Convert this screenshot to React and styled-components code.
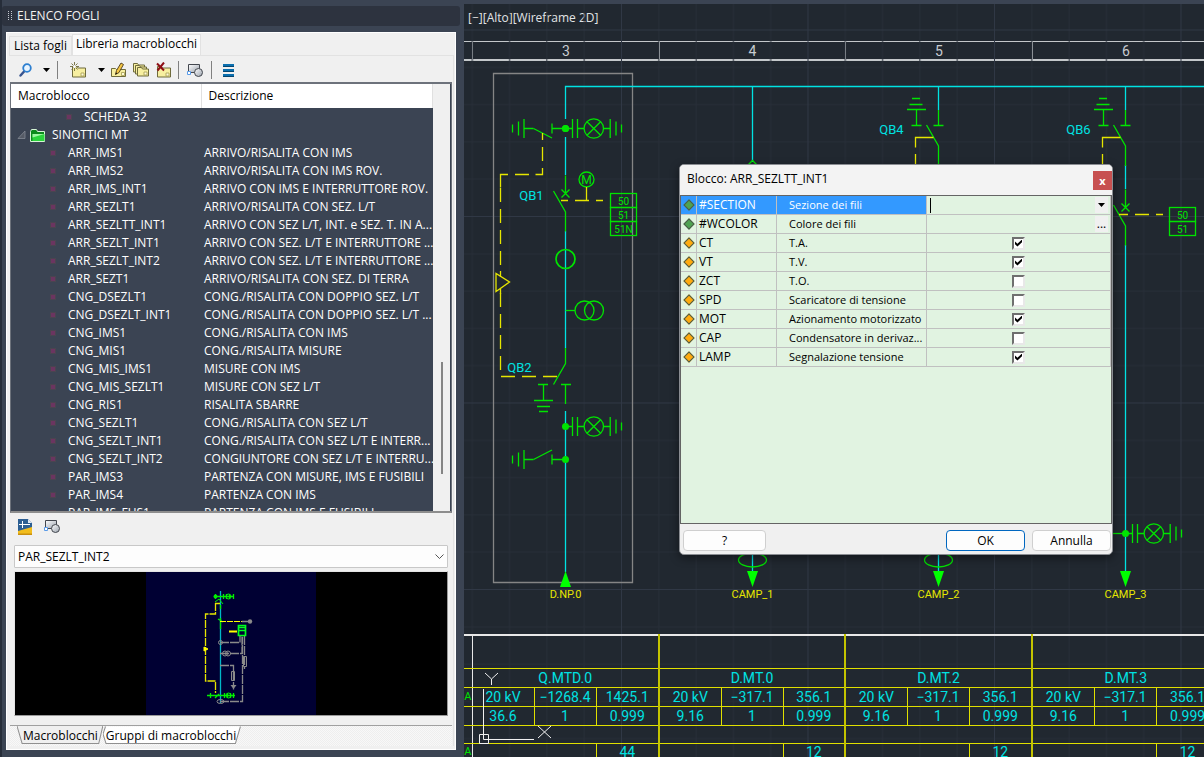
import React, { useState } from "react"
import styled, { createGlobalStyle } from "styled-components"

const GlobalStyle = createGlobalStyle`
  * {
    box-sizing: border-box;
  }
  body {
    margin: 0;
    background: #3b4453;
    color: #000;
    font: 12px/18px "Open Sans", "Noto Sans", sans-serif;
  }
  button, input, select {
    font: inherit;
    color: inherit;
  }
`

const Page = styled.div`
  display: grid;
  grid-template-columns: 464px minmax(0, 1fr);
  min-height: 100vh;
`

/* ---------- left palette ---------- */

const Palette = styled.aside`
  display: flex;
  flex-direction: column;
  height: 100vh;
  padding: 6px 4px 7px 0;
  border-left: 2px solid #262d39;
`

const PaletteTitle = styled.h1`
  display: flex;
  align-items: center;
  gap: 5px;
  height: 20px;
  margin: 0 0 6px;
  padding-left: 6px;
  border-radius: 3px;
  background: #2d333f;
  color: #f2f2f2;
  font-size: 12px;
  font-weight: 400;
`

const PaletteBody = styled.div`
  display: flex;
  flex: 1;
  flex-direction: column;
  min-height: 0;
  margin: 0 4px;
  padding: 1px 1px 3px 2px;
  border: 1px solid #fff;
  background: #f0f0f0;
`

const TopTabs = styled.div`
  display: flex;
  align-items: flex-end;
  height: 21px;
  flex: none;
`

const TopTab = styled.button`
  height: ${props => (props.$active ? 21 : 19)}px;
  padding: ${props => (props.$active ? "0 3px 2px" : "0 4px")};
  border: 1px solid #e2e2e2;
  border-bottom: 0;
  background: ${props => (props.$active ? "#fbfbfb" : "#f0f0f0")};
  line-height: 18px;
  white-space: nowrap;
`

const TopPane = styled.div`
  display: flex;
  flex: 1;
  flex-direction: column;
  min-height: 0;
  padding: 2px 1px 0;
  border-top: 1px solid #e2e2e2;
  border-right: 1px solid #e2e2e2;
`

const Toolbar = styled.div`
  display: flex;
  align-items: center;
  height: ${props => props.$height}px;
  flex: none;
  padding-left: 6px;
`

const ToolButton = styled.button`
  display: flex;
  flex: none;
  align-items: center;
  justify-content: center;
  width: ${props => props.$width}px;
  height: 22px;
  padding: 0;
  border: 0;
  background: none;

  & > svg {
    flex: none;
  }
`

const Separator = styled.span`
  width: 1px;
  height: 18px;
  background: #808080;
`

const ListFrame = styled.div`
  display: flex;
  flex: 1;
  min-height: 0;
  border: 1px solid #6d727b;
  border-top: 2px solid #6d727b;
  border-bottom: 2px solid #8d8d8d;
  background: #f0f0f0;
  overflow: hidden;
`

const ListBody = styled.div`
  flex: 1;
  min-width: 0;
  background: #3b4453;
  overflow: hidden;
`

const MacroTable = styled.table`
  width: 100%;
  table-layout: fixed;
  border-collapse: collapse;
  color: #fff;

  thead {
    background: #fff;
    color: #000;
  }
  th {
    height: 24px;
    padding: 0 7px;
    border-right: 1px solid #e0e0e0;
    font-weight: 400;
    text-align: left;
  }
  th:first-child {
    width: 190px;
  }
  td {
    height: 18px;
    padding: 0 0 0 3px;
    white-space: nowrap;
  }
`

const NodeLabel = styled.div`
  display: flex;
  align-items: center;
  gap: ${props => (props.$folder ? 5 : 12)}px;
  height: 18px;
  padding-left: ${props => props.$indent}px;
`

const LeafMark = styled.span`
  width: 6px;
  height: 6px;
  border: 1px solid #4b4450;
  background: #6b3560;
`

const ScrollTrack = styled.div`
  display: flex;
  justify-content: center;
  width: 18px;
  padding-top: 278px;
  border-right: 1px solid #3b4453;
`

const ScrollThumb = styled.span`
  width: 2px;
  height: 112px;
  background: #858585;
`

const BlockSelect = styled.select`
  flex: none;
  height: 23px;
  margin: 5px 4px 0 4px;
  padding: 0 22px 0 3px;
  border: 1px solid #c8c8c8;
  border-radius: 1px;
  appearance: none;
  background: #fdfdfd;
`

const SelectWrap = styled.div`
  display: grid;
  flex: none;

  & > * {
    grid-area: 1 / 1;
  }
  & > svg {
    align-self: center;
    justify-self: end;
    margin: 5px 8px 0 0;
    pointer-events: none;
  }
`

const Preview = styled.div`
  display: flex;
  flex: none;
  justify-content: center;
  height: 145px;
  margin: 3px 4px 0 4px;
  border: 1px solid #e4e4e4;
  border-right-color: #9a9a9a;
  border-bottom-color: #9a9a9a;
  background: #000;
`

const BottomTabs = styled.div`
  display: flex;
  flex: none;
  height: 21px;
  margin-top: 9px;
  border-top: 1px solid #a0a0a0;
  background: repeating-conic-gradient(#f8f8f8 0 25%, #eeeeee 0 50%) 0 0 / 2px 2px;
`

const BottomTab = styled.button`
  position: relative;
  height: 18px;
  margin-left: ${props => (props.$first ? 7 : 0)}px;
  padding: 0 5px 0 ${props => (props.$first ? 6 : 3)}px;
  border: 0;
  background: none;
  line-height: 17px;
  white-space: nowrap;

  & > svg {
    position: absolute;
    inset: 0;
    width: 100%;
    height: 100%;
  }
  & > span {
    position: relative;
  }
`

/* ---------- drawing area ---------- */

const Canvas = styled.main`
  position: relative;
  display: flex;
  flex-direction: column;
  height: 100vh;
  border-top: 4px solid #3b4453;
  background: #212830;
  font-family: "Roboto", sans-serif;
  overflow: hidden;
`

const Sheet = styled.svg`
  position: absolute;
  inset: 0;
  width: 100%;
  height: 100%;
`

const ViewLabel = styled.p`
  height: 37px;
  margin: 0;
  padding: 5px 4px;
  color: #e2e4e6;
  font: 12px/18px "Open Sans", "Noto Sans", sans-serif;
`

const Ruler = styled.div`
  display: flex;
  flex: none;
  height: 20px;
  border-top: 1px solid #c4c8cb;
  border-bottom: 2px solid #c4c8cb;
  padding-left: 8px;
  overflow: hidden;
`

const RulerCell = styled.span`
  flex: 0 0 ${props => props.$width}px;
  border-left: 1px solid #c4c8cb;
  color: #c8ccd0;
  font-size: 14px;
  line-height: 18px;
  text-align: center;
`

const DataTable = styled.table`
  position: relative;
  flex: none;
  width: 755px;
  margin-top: auto;
  margin-bottom: -4px;
  table-layout: fixed;
  border-collapse: collapse;
  border-top: 2px solid #e8e8e8;
  color: #00e2e2;
  font-size: 14px;
  line-height: 16px;

  colgroup + colgroup + colgroup {
    border-left: 2px solid #c4c400;
  }
  td, th {
    padding: 0;
    border: 1px solid #e0e000;
    font-weight: 400;
    text-align: center;
    white-space: nowrap;
    overflow: hidden;
  }
  tr:first-child > td {
    border-top-color: #e8e8e8;
  }
  tr > :first-child {
    border-left: 0;
    border-right: 1px solid #e8e8e8;
    color: #00e000;
    font-size: 11px;
  }
`

const DataRow = styled.tr`
  height: ${props => props.$height}px;
`

const Ucs = styled.svg`
  position: absolute;
  left: 14px;
  bottom: 12px;
`

/* ---------- dialog ---------- */

const Dialog = styled.section`
  position: absolute;
  top: 160px;
  left: 215px;
  display: flex;
  flex-direction: column;
  width: 434px;
  height: 391px;
  border: 1px solid #8a8d92;
  border-radius: 5px;
  background: #f0f0f0;
  box-shadow: 0 3px 10px rgba(0, 0, 0, 0.45);
  font: 12px/18px "Open Sans", "Noto Sans", sans-serif;
  overflow: hidden;
`

const DialogHead = styled.header`
  display: flex;
  justify-content: space-between;
  height: 30px;
  padding: 5px 0 0 7px;
  background: #f3f3f3;
`

const DialogTitle = styled.h2`
  margin: 0;
  font-size: 12px;
  font-weight: 400;
`

const CloseButton = styled.button`
  width: 19px;
  height: 19px;
  margin-top: 1px;
  padding: 0;
  border: 0;
  background: #c75050;
  color: #fff;
  font-size: 11px;
  font-weight: 700;
  line-height: 17px;
`

const Properties = styled.div`
  flex: 1;
  border: 1px solid #646464;
  background: #e1f3e1;
`

const PropertyTable = styled.table`
  width: 100%;
  table-layout: fixed;
  border-spacing: 0;

  col:nth-child(1) {
    width: 16px;
  }
  col:nth-child(2) {
    width: 80px;
  }
  col:nth-child(3) {
    width: 150px;
  }
  td {
    height: 19px;
    padding: 0;
    border-right: 1px solid #c0c0c0;
    border-bottom: 1px solid #c0c0c0;
    white-space: nowrap;
  }
  td:nth-child(2) {
    padding-left: 2px;
  }
  td:nth-child(3) {
    padding-left: 12px;
    font-size: 11px;
  }
  td:nth-child(4) {
    text-align: center;
  }
`

const PropertyRow = styled.tr`
  & > td:not(:last-child) {
    background: ${props => (props.$selected ? "#3399ff" : "transparent")};
    color: ${props => (props.$selected ? "#fff" : "#000")};
  }
`

const Diamond = styled.span`
  display: block;
  width: 8px;
  height: 8px;
  margin: 0 auto;
  border: 1px solid #4a5a48;
  background: ${props => (props.$green ? "#4fa351" : "#ffab0f")};
  transform: rotate(45deg);
`

const ValueBox = styled.div`
  display: flex;
  align-items: center;
  height: 18px;
  padding: 0 2px 0 3px;
`

const ValueInput = styled.input`
  flex: 1;
  min-width: 0;
  height: 15px;
  padding: 0;
  border: 0;
  border-left: ${props => (props.$caret ? "1px solid #000" : 0)};
  background: transparent;
  outline: none;
`

const ValueButton = styled.button`
  display: flex;
  align-items: center;
  justify-content: center;
  width: 13px;
  height: 16px;
  padding: 0;
  border: 0;
  background: #f0f0f0;
  line-height: 12px;
`

const Check = styled.input`
  position: relative;
  display: block;
  width: 13px;
  height: 13px;
  margin: 0 auto;
  border: 2px solid #6f6f6f;
  border-right-color: #e8e8e8;
  border-bottom-color: #e8e8e8;
  appearance: none;
  background: #fff;

  &:checked::after {
    content: "";
    position: absolute;
    inset: 1px;
    background: #000;
    clip-path: polygon(0 30%, 35% 62%, 100% 0, 100% 38%, 35% 100%, 0 68%);
  }
`

const DialogFoot = styled.footer`
  display: flex;
  gap: 7px;
  padding: 6px 1px 3px 3px;
`

const DialogButton = styled.button`
  width: ${props => props.$width || 79}px;
  height: 21px;
  margin-right: ${props => (props.$push ? "auto" : 0)};
  padding: 0;
  border: 1px solid ${props => (props.$primary ? "#0067c0" : "#cfcfcf")};
  border-radius: 4px;
  background: #fdfdfd;
  line-height: 18px;
`

/* ---------- data ---------- */

const macros = [
  ["ARR_IMS1", "ARRIVO/RISALITA CON IMS"],
  ["ARR_IMS2", "ARRIVO/RISALITA CON IMS ROV."],
  ["ARR_IMS_INT1", "ARRIVO CON IMS E INTERRUTTORE ROV."],
  ["ARR_SEZLT1", "ARRIVO/RISALITA CON SEZ. L/T"],
  ["ARR_SEZLTT_INT1", "ARRIVO CON SEZ L/T, INT. e SEZ. T. IN A..."],
  ["ARR_SEZLT_INT1", "ARRIVO CON SEZ. L/T E INTERRUTTORE ..."],
  ["ARR_SEZLT_INT2", "ARRIVO CON SEZ. L/T E INTERRUTTORE ..."],
  ["ARR_SEZT1", "ARRIVO/RISALITA CON SEZ. DI TERRA"],
  ["CNG_DSEZLT1", "CONG./RISALITA CON DOPPIO SEZ. L/T"],
  ["CNG_DSEZLT_INT1", "CONG./RISALITA CON DOPPIO SEZ. L/T ..."],
  ["CNG_IMS1", "CONG./RISALITA CON IMS"],
  ["CNG_MIS1", "CONG./RISALITA MISURE"],
  ["CNG_MIS_IMS1", "MISURE CON IMS"],
  ["CNG_MIS_SEZLT1", "MISURE CON SEZ L/T"],
  ["CNG_RIS1", "RISALITA SBARRE"],
  ["CNG_SEZLT1", "CONG./RISALITA CON SEZ L/T"],
  ["CNG_SEZLT_INT1", "CONG./RISALITA CON SEZ L/T E INTERR..."],
  ["CNG_SEZLT_INT2", "CONGIUNTORE CON SEZ L/T E INTERRU..."],
  ["PAR_IMS3", "PARTENZA CON MISURE, IMS E FUSIBILI"],
  ["PAR_IMS4", "PARTENZA CON IMS"],
  ["PAR_IMS_FUS1", "PARTENZA CON IMS E FUSIBILI"],
]

const properties = [
  { id: "CT", label: "T.A.", on: true },
  { id: "VT", label: "T.V.", on: true },
  { id: "ZCT", label: "T.O.", on: false },
  { id: "SPD", label: "Scaricatore di tensione", on: false },
  { id: "MOT", label: "Azionamento motorizzato", on: true },
  { id: "CAP", label: "Condensatore in derivaz...", on: false },
  { id: "LAMP", label: "Segnalazione tensione", on: true },
]

const sections = [
  { no: 3, name: "Q.MTD.0", width: 187, row1: ["20 kV", "−1268.4", "1425.1"], row2: ["36.6", "1", "0.999"], total: "44" },
  { no: 4, name: "D.MT.0", width: 186, row1: ["20 kV", "−317.1", "356.1"], row2: ["9.16", "1", "0.999"], total: "12" },
  { no: 5, name: "D.MT.2", width: 187, row1: ["20 kV", "−317.1", "356.1"], row2: ["9.16", "1", "0.999"], total: "12" },
  { no: 6, name: "D.MT.3", width: 187, row1: ["20 kV", "−317.1", "356.1"], row2: ["9.16", "1", "0.999"], total: "12" },
]

/* ---------- icons ---------- */

const Caret = () => (
  <svg width="7" height="4" viewBox="0 0 7 4">
    <path d="M0 0h7L3.500 4z" fill="#000" />
  </svg>
)

const SearchIcon = () => (
  <svg width="16" height="16" viewBox="0 0 16 16" fill="none">
    <path d="M6.500 9 2.500 13.500" stroke="#39558f" strokeWidth="2.500" strokeLinecap="round" />
    <circle cx="9" cy="6" r="3.800" fill="#e8f4ff" stroke="#2d7fd0" strokeWidth="1.800" />
  </svg>
)

const Note = ({ x, y, w = 13, h = 10 }) => (
  <g transform={`translate(${x} ${y})`}>
    <path d={`M.5 .5h4l1 1.500h${w - 6}v${h - 2}H.5z`} fill="#f7efa0" stroke="#6f6b3c" />
    <path d={`M${w - 5} ${h - 4}h3v3h-3z`} fill="#fffbd8" stroke="#a59d52" strokeWidth=".8" />
  </g>
)

const NewIcon = () => (
  <svg width="17" height="16" viewBox="0 0 17 16">
    <Note x={2} y={4} w={14} h={11} />
    <path d="M4.500 0v9M0 4.500h9M1.500 1.500l6 6M7.500 1.500l-6 6" stroke="#6f6b3c" strokeWidth=".9" />
    <circle cx="4.500" cy="4.500" r="1.500" fill="#fff" />
  </svg>
)

const EditIcon = () => (
  <svg width="16" height="16" viewBox="0 0 16 16">
    <path d="M.5 6.500h4l1 1h9v7H.5z" fill="#f7efa0" stroke="#6f6b3c" />
    <path d="M4.500 12.500l1-4L10 1l2.500 1.500-4.500 8z" fill="#f4c542" stroke="#4b3a1a" strokeWidth=".9" />
    <path d="M4.500 12.500l.5-2 1.200.8z" />
    <path d="M10.500 10.500h3v3h-3z" fill="#fffbd8" stroke="#a59d52" strokeWidth=".8" />
  </svg>
)

const CopyIcon = () => (
  <svg width="17" height="16" viewBox="0 0 17 16">
    <Note x={0} y={1} w={12} h={9} />
    <Note x={2} y={3} w={12} h={9} />
    <Note x={4} y={5} w={12} h={9} />
  </svg>
)

const DeleteIcon = () => (
  <svg width="16" height="16" viewBox="0 0 16 16">
    <Note x={1} y={4} w={14} h={11} />
    <path d="M1 1.500l7 7M8 .5l-6.500 8" stroke="#8e0f16" strokeWidth="2" />
  </svg>
)

const ShapesIcon = () => (
  <svg width="17" height="15" viewBox="0 0 17 15">
    <defs>
      <linearGradient id="steel" x1="0" y1="0" x2="1" y2="1">
        <stop offset="0" stopColor="#fff" />
        <stop offset="1" stopColor="#9aa2ad" />
      </linearGradient>
    </defs>
    <path d="M1.500 1.500h11v8h-11z" fill="url(#steel)" stroke="#43474e" />
    <circle cx="11.500" cy="9.500" r="4" fill="url(#steel)" stroke="#43474e" />
    <path d="M.5 8.500h3v3h-3z" fill="#fff" stroke="#5a9be8" />
  </svg>
)

const ListIcon = () => (
  <svg width="11" height="13" viewBox="0 0 11 13">
    <path d="M0 0h11v3H0zM0 5h11v3H0zM0 10h11v3H0z" fill="#0b6fae" />
    <path d="M0 2h11v1H0zM0 7h11v1H0zM0 12h11v1H0z" fill="#07466f" />
  </svg>
)

const DwgIcon = () => (
  <svg width="14" height="16" viewBox="0 0 14 16">
    <path d="M0 0h10l4 4v12H0z" fill="#2c5f93" />
    <path d="M10 0l4 4h-4z" fill="#dfe9f4" />
    <path d="M0 12l14-4v8H0z" fill="#f2bd1d" />
    <path d="M0 14.500h14V16H0z" fill="#c98f10" />
    <path d="M4.500 2v7M1 5.500h11" stroke="#fff" />
  </svg>
)

const FolderIcon = () => (
  <svg width="30" height="15" viewBox="0 0 30 15">
    <path d="M1 10.500h7V3z" fill="#555b66" stroke="#8b919b" strokeWidth=".7" />
    <path d="M13.500 3.500l1-2h5l1 2h7v10h-14z" fill="#0c8a1c" stroke="#d6f5d6" />
    <path d="M15.500 6h12v7h-12z" fill="#2bd43c" />
    <path d="M15.500 6h12l-12 3.500z" fill="#9df7a2" />
  </svg>
)

const GripIcon = () => (
  <svg width="4" height="10" viewBox="0 0 4 10" fill="#c5c9d0">
    {[0, 2, 4, 6, 8].map(y => (
      <path key={y} d={`M0 ${y}h1v1H0zM3 ${y}h1v1H3z`} />
    ))}
  </svg>
)

/* ---------- schematic parts ---------- */

const green = "#00e400"
const cyan = "#00e2e2"
const yellow = "#e6e600"

const Lamp = ({ x, y }) => (
  <g transform={`translate(${x} ${y})`} stroke={green}>
    <circle r="3.500" fill={green} stroke="none" />
    <path d="M0 0H7M7-9.500v19M12-9.500v19M12 0h6.500M38 0h6.700M44.700-9.500v19M50.500-7v14M56-4v8" />
    <circle cx="28.300" r="9.700" />
    <path d="M21.500-6.800l13.600 13.600M35.100-6.800L21.500 6.800" />
  </g>
)

const EarthSwitch = ({ x, y, up }) => (
  <g transform={`translate(${x} ${y})`} stroke={green}>
    <path d="M-53-4v8M-47-7v14M-41.500-9.500v19M-41.500 0h9.500M-13.500-5v10M-13.500 0H0" />
    <path d={up ? "M-32 0L-13.500-9.500" : "M-32 0L-13.500 9.500"} />
    <circle r="3.500" fill={green} stroke="none" />
  </g>
)

const LineSwitch = ({ x, label }) => (
  <g transform={`translate(${x} 0)`}>
    <path d="M0 86v24" stroke={cyan} />
    <path d="M0 110v15.500M-5 125.500h10M-12 125l12 21v20" stroke={green} />
    <path
      d="M-26.500 98.500h8M-29 104.500h13M-31.500 109.500h19M-22 109.500v16M-27 125.500h10"
      stroke={green}
    />
    <path d="M-5 137.500h-18v10M-23 154v12" stroke={yellow} />
    <text x="-47" y="134" fill={cyan} fontSize="13" textAnchor="middle">
      {label}
    </text>
  </g>
)

const Breaker = ({ x, y }) => (
  <g transform={`translate(${x} ${y})`} stroke={green}>
    <path d="M0-18V0M-4-4l8 8M4-4l-8 8M-12-2.500L0 18.500V38" />
  </g>
)

const Relays = ({ x, y, codes }) => (
  <g transform={`translate(${x} ${y})`}>
    {codes.map((code, i) => (
      <g key={code}>
        <rect y={i * 14} width="26" height="14" stroke={green} />
        <text x="13" y={i * 14 + 11} fill={green} fontSize="10" textAnchor="middle">
          {code}
        </text>
      </g>
    ))}
  </g>
)

const FeederEnd = ({ x, label, ring }) => (
  <g transform={`translate(${x} 0)`}>
    {ring && (
      <>
        <path d="M0 550v22" stroke={cyan} />
        <ellipse cy="560" rx="14" ry="7" stroke={green} />
      </>
    )}
    <path d="M-5.500 571h11L0 587z" fill="#00ff00" />
    <text y="598" fill={yellow} fontSize="11" textAnchor="middle">
      {label}
    </text>
  </g>
)

const Schematic = () => (
  <Sheet fill="none">
    <defs>
      <pattern id="grid" width="186.5" height="186.5" patternUnits="userSpaceOnUse" x="621" y="216">
        <path
          d="M37.800 0v186.500M75.100 0v186.500M112.400 0v186.500M149.700 0v186.500M0 37.800h186.500M0 75.100h186.500M0 112.400h186.500M0 149.700h186.500"
          stroke="#272e38"
        />
        <path d="M.5 0v186.500M0 .5h186.500" stroke="#303845" />
      </pattern>
    </defs>
    <g transform="translate(-464 -4)" strokeWidth="1.3">
      <rect x="464" y="0" width="4000" height="3000" fill="url(#grid)" />
      <path d="M493.500 73.500h139v509h-139z" stroke="#858585" />
      <path d="M565.500 119V86.500H4000" stroke={cyan} />
      <path
        d="M565.500 137v38M565.500 231v117M565.500 411v161M752.500 86v76M1125.500 165v24M1125.500 245v327"
        stroke={cyan}
      />
      <EarthSwitch x={565.5} y={128.5} />
      <Lamp x={565.5} y={128.5} />
      <Breaker x={565.5} y={193.5} />
      <circle cx="586.500" cy="179.500" r="7.500" stroke={green} />
      <text x="586.500" y="184" fill={green} fontSize="12" textAnchor="middle">
        M
      </text>
      <path d="M586.500 187v13M561 200.500h7M575 200.500h14M596 200.500h7" stroke={yellow} />
      <path
        d="M542.500 133v7M542.500 147v14M542.500 168v6.500h-7M529 174.500h-14M508 174.500h-7.500v13"
        stroke={yellow}
      />
      <path d="M500.500 188v83M500.500 293v83.500H561" stroke={yellow} strokeDasharray="14 7" />
      <path d="M496 273.500v18l13.500-9.500zM500.500 271v6M500.500 288v6" stroke={yellow} />
      <circle cx="565.500" cy="259" r="9.500" stroke={green} strokeWidth="1.700" />
      <path d="M565.500 310.500h9.500" stroke={green} />
      <circle cx="584.500" cy="310.500" r="9.500" stroke={green} />
      <circle cx="594" cy="310.500" r="9.500" stroke={green} />
      <Relays x={610.5} y={193.5} codes={["50", "51", "51N"]} />
      <path d="M565.500 348v15.500l-12 21M561 384.500h10M565.500 384.500V404" stroke={green} />
      <path
        d="M538 384.500h10M543.500 384.500v16M534 400.500h19M537 406.500h13M539 411.500h9"
        stroke={green}
      />
      <Lamp x={565.5} y={426.5} />
      <EarthSwitch x={565.5} y={459.5} up />
      <text x="531.500" y="200" fill={cyan} fontSize="13" textAnchor="middle">
        QB1
      </text>
      <text x="519.500" y="372" fill={cyan} fontSize="13" textAnchor="middle">
        QB2
      </text>
      <path d="M560 587h11l-5.500-16z" fill="#00ff00" />
      <text x="565.500" y="598" fill={yellow} fontSize="11" textAnchor="middle">
        D.NP.0
      </text>
      <path d="M748 165l4.500-4.500 4.500 4.500" stroke={green} />
      <LineSwitch x={938.5} label="QB4" />
      <LineSwitch x={1125.5} label="QB6" />
      <Breaker x={1125.5} y={207.5} />
      <path d="M1119 214.500h9M1135 214.500h14M1156 214.500h7" stroke={yellow} />
      <Relays x={1169.5} y={207.5} codes={["50", "51"]} />
      <path d="M1100 533.500h25" stroke={green} />
      <Lamp x={1125.5} y={533.5} />
      <FeederEnd x={752.5} label="CAMP_1" ring />
      <FeederEnd x={938.5} label="CAMP_2" ring />
      <FeederEnd x={1125.5} label="CAMP_3" />
    </g>
  </Sheet>
)

const PreviewDrawing = () => (
  <svg width="170" height="143" viewBox="0 0 170 143" fill="none">
    <path d="M0 0h170v143H0z" fill="#000033" />
    <path d="M74.500 19v112" stroke="#00b8c8" strokeWidth="1.3" />
    <path
      d="M68 24.500h20M69.500 22v5M77.500 22v5M80.500 22v5M83.500 22v5M87.500 22v5M74.500 33v4M72 47l5 3M74.500 46v11M61 123.500h28M64.500 121v5M69 126l4-4M78.500 121v5M81.500 121v5M84.500 121v5M87.500 121v5"
      stroke="#00f000"
      strokeWidth="1.3"
    />
    <path d="M69 30l4-3 4 5" stroke="#00f000" />
    <circle cx="69.500" cy="24.500" r="2" fill="#00f000" />
    <circle cx="82.500" cy="24.500" r="2.500" stroke="#00f000" />
    <circle cx="82.500" cy="123.500" r="2.500" stroke="#00f000" />
    <path
      d="M74 31.500h-5M69.500 31v11H59.500V109h10v12"
      stroke="#e6e600"
      strokeWidth="1.3"
      strokeDasharray="8 1"
    />
    <path d="M74 49.500h22" stroke="#ffff00" strokeDasharray="6 1" />
    <path d="M83 59.500h8" stroke="#ffff00" strokeWidth="2" />
    <path d="M58 75l4 2-4 2z" fill="#ffff00" stroke="#ffff00" />
    <path
      d="M96 49.500h8M74 70.500h20v-7M74 81.500h22v-17M98.500 64v33M74 93.500h13.500v24M74 129.500h22.500V65"
      stroke="#8a8a8a"
      strokeWidth="1.3"
      strokeDasharray="9 1"
    />
    <path d="M85.500 99.500h3v9h-3zM97.500 84.500h3v10h-3z" stroke="#8a8a8a" />
    <path d="M84.500 113h6l-3 4z" fill="#8a8a8a" />
    <circle cx="104" cy="49.500" r="2.200" fill="#8a8a8a" />
    <circle cx="79" cy="81.500" r="2.500" stroke="#8a8a8a" />
    <circle cx="82" cy="81.500" r="2.500" stroke="#8a8a8a" />
    <circle cx="74.500" cy="70.500" r="2" stroke="#8a8a8a" />
    <ellipse cx="74.500" cy="129.500" rx="3.500" ry="2" stroke="#8a8a8a" />
    <path d="M92.500 53.500h7v10h-7zM92 55.500h8M92 58.500h8" stroke="#00ff20" strokeWidth="1.700" />
  </svg>
)

/* ---------- panels ---------- */

const MacroList = () => (
  <ListFrame>
    <ListBody>
      <MacroTable>
        <thead>
          <tr>
            <th>Macroblocco</th>
            <th>Descrizione</th>
          </tr>
        </thead>
        <tbody>
          <tr>
            <td>
              <NodeLabel $indent={52}>
                <LeafMark />
                SCHEDA 32
              </NodeLabel>
            </td>
            <td />
          </tr>
          <tr>
            <td>
              <NodeLabel $folder $indent={3}>
                <FolderIcon />
                SINOTTICI MT
              </NodeLabel>
            </td>
            <td />
          </tr>
          {macros.map(([name, description]) => (
            <tr key={name}>
              <td>
                <NodeLabel $indent={36}>
                  <LeafMark />
                  {name}
                </NodeLabel>
              </td>
              <td>{description}</td>
            </tr>
          ))}
        </tbody>
      </MacroTable>
    </ListBody>
    <ScrollTrack>
      <ScrollThumb />
    </ScrollTrack>
  </ListFrame>
)

const SheetPalette = () => (
  <Palette>
    <PaletteTitle>
      <GripIcon />
      ELENCO FOGLI
    </PaletteTitle>
    <PaletteBody>
      <TopTabs>
        <TopTab>Lista fogli</TopTab>
        <TopTab $active>Libreria macroblocchi</TopTab>
      </TopTabs>
      <TopPane>
        <Toolbar $height={24}>
          <ToolButton $width={20} aria-label="Cerca">
            <SearchIcon />
          </ToolButton>
          <ToolButton $width={21} aria-label="Opzioni di ricerca">
            <Caret />
          </ToolButton>
          <Separator />
          <ToolButton $width={40} aria-label="Nuovo">
            <NewIcon />
          </ToolButton>
          <ToolButton $width={7} aria-label="Opzioni nuovo">
            <Caret />
          </ToolButton>
          <ToolButton $width={27} aria-label="Modifica">
            <EditIcon />
          </ToolButton>
          <ToolButton $width={18} aria-label="Copia">
            <CopyIcon />
          </ToolButton>
          <ToolButton $width={28} aria-label="Elimina">
            <DeleteIcon />
          </ToolButton>
          <Separator />
          <ToolButton $width={32} aria-label="Forme">
            <ShapesIcon />
          </ToolButton>
          <Separator />
          <ToolButton $width={32} aria-label="Elenco">
            <ListIcon />
          </ToolButton>
        </Toolbar>
        <MacroList />
        <Toolbar $height={27}>
          <ToolButton $width={18} aria-label="Disegno">
            <DwgIcon />
          </ToolButton>
          <ToolButton $width={36} aria-label="Forme blocco">
            <ShapesIcon />
          </ToolButton>
        </Toolbar>
        <SelectWrap>
          <BlockSelect aria-label="Blocco">
            <option>PAR_SEZLT_INT2</option>
          </BlockSelect>
          <svg width="9" height="5" viewBox="0 0 9 5" fill="none">
            <path d="M.5 .5l4 4 4-4" stroke="#555" />
          </svg>
        </SelectWrap>
        <Preview>
          <PreviewDrawing />
        </Preview>
        <BottomTabs>
          <BottomTab $first>
            <svg viewBox="0 0 84 18" preserveAspectRatio="none" fill="none">
              <path d="M0 0l5 17.500h75L84 0" fill="#f0f0f0" stroke="#909090" />
            </svg>
            <span>Macroblocchi</span>
          </BottomTab>
          <BottomTab>
            <svg viewBox="0 0 138 18" preserveAspectRatio="none" fill="none">
              <path d="M2.500 .5L0 8l3 9.500h129L137 .5" fill="#fff" stroke="#909090" />
            </svg>
            <span>Gruppi di macroblocchi</span>
          </BottomTab>
        </BottomTabs>
      </TopPane>
    </PaletteBody>
  </Palette>
)

const BlockDialog = () => {
  const [checked, setChecked] = useState(() =>
    Object.fromEntries(properties.map(p => [p.id, p.on]))
  )

  return (
    <Dialog role="dialog" aria-labelledby="block-title">
      <DialogHead>
        <DialogTitle id="block-title">Blocco: ARR_SEZLTT_INT1</DialogTitle>
        <CloseButton aria-label="Chiudi">x</CloseButton>
      </DialogHead>
      <Properties>
        <PropertyTable>
          <colgroup>
            <col />
            <col />
            <col />
            <col />
          </colgroup>
          <tbody>
            <PropertyRow $selected>
              <td>
                <Diamond $green />
              </td>
              <td>#SECTION</td>
              <td>
                <label htmlFor="SECTION">Sezione dei fili</label>
              </td>
              <td>
                <ValueBox>
                  <ValueInput id="SECTION" $caret />
                  <ValueButton aria-label="Apri elenco">
                    <Caret />
                  </ValueButton>
                </ValueBox>
              </td>
            </PropertyRow>
            <PropertyRow>
              <td>
                <Diamond $green />
              </td>
              <td>#WCOLOR</td>
              <td>
                <label htmlFor="WCOLOR">Colore dei fili</label>
              </td>
              <td>
                <ValueBox>
                  <ValueInput id="WCOLOR" />
                  <ValueButton>...</ValueButton>
                </ValueBox>
              </td>
            </PropertyRow>
            {properties.map(({ id, label }) => (
              <PropertyRow key={id}>
                <td>
                  <Diamond />
                </td>
                <td>{id}</td>
                <td>
                  <label htmlFor={id}>{label}</label>
                </td>
                <td>
                  <Check
                    id={id}
                    type="checkbox"
                    checked={checked[id]}
                    onChange={e => setChecked({ ...checked, [id]: e.target.checked })}
                  />
                </td>
              </PropertyRow>
            ))}
          </tbody>
        </PropertyTable>
      </Properties>
      <DialogFoot>
        <DialogButton $width={83} $push>
          ?
        </DialogButton>
        <DialogButton $primary>OK</DialogButton>
        <DialogButton>Annulla</DialogButton>
      </DialogFoot>
    </Dialog>
  )
}

const SectionTable = () => (
  <DataTable>
    <colgroup>
      <col width="8" />
    </colgroup>
    {sections.map(s => (
      <colgroup key={s.no}>
        <col width="62" />
        <col width="62" />
        <col width={s.width - 124} />
      </colgroup>
    ))}
    <tbody>
      <DataRow $height={34}>
        <td />
        {sections.map(s => (
          <td key={s.no} colSpan={3} />
        ))}
      </DataRow>
      <DataRow $height={19}>
        <td />
        {sections.map(s => (
          <th key={s.no} colSpan={3}>
            {s.name}
          </th>
        ))}
      </DataRow>
      <DataRow $height={19}>
        <td>A</td>
        {sections.map(s => s.row1.map(v => <td key={s.no + v}>{v}</td>))}
      </DataRow>
      <DataRow $height={19}>
        <td />
        {sections.map(s => s.row2.map(v => <td key={s.no + v}>{v}</td>))}
      </DataRow>
      <DataRow $height={18}>
        <td />
        {sections.map(s => (
          <td key={s.no} colSpan={3} />
        ))}
      </DataRow>
      <DataRow $height={17}>
        <td>A</td>
        {sections.map(s => (
          <React.Fragment key={s.no}>
            <td colSpan={2} />
            <td>{s.total}</td>
          </React.Fragment>
        ))}
      </DataRow>
    </tbody>
  </DataTable>
)

const Drawing = () => (
  <Canvas>
    <Schematic />
    <ViewLabel>[−][Alto][Wireframe 2D]</ViewLabel>
    <Ruler>
      {sections.map(s => (
        <RulerCell key={s.no} $width={s.width}>
          {s.no}
        </RulerCell>
      ))}
    </Ruler>
    <SectionTable />
    <Ucs width="76" height="76" viewBox="478 669 76 76" fill="none" stroke="#f0f0f0">
      <path d="M485 673l6.500 6 6.500-6M491.500 679v6M538 726l13 12M551 726l-13 12" />
      <path d="M479.500 734.500h9v9h-9zM483.500 689v50.500H534" />
    </Ucs>
    <BlockDialog />
  </Canvas>
)

const App = () => (
  <>
    <GlobalStyle />
    <Page>
      <SheetPalette />
      <Drawing />
    </Page>
  </>
)

export default App
